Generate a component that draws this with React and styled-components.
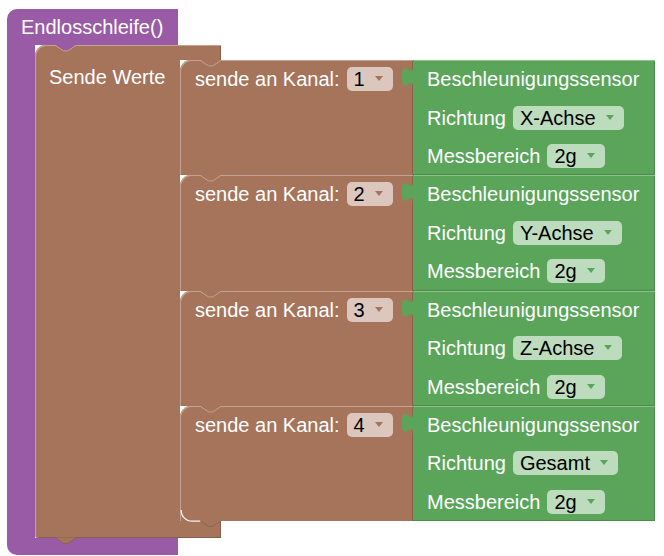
import React from 'react';
import styled, { createGlobalStyle } from 'styled-components';

const C = {
  purple: '#995ba5',
  brown: '#a5745b',
  brownLight: '#c3a291',
  brownDark: '#8a5f4a',
  brownField: '#dbc7bd',
  green: '#5ba55b',
  greenLight: '#8dc28d',
  greenDark: '#4b8c4b',
  greenField: '#bddcbd',
};

const Global = createGlobalStyle`
  html, body { margin: 0; padding: 0; background: #ffffff; }
  body { font-family: "Liberation Sans", Arial, sans-serif; }
`;

const Canvas = styled.div`
  width: 664px;
  height: 556px;
  overflow: hidden;
  box-sizing: border-box;
  padding: 9px 0 0 7px;
  font-family: "Liberation Sans", Arial, sans-serif;
  font-size: 20px;
`;

const Label = styled.span`
  color: #ffffff;
  font-size: 20px;
  line-height: 24px;
  white-space: nowrap;
`;

/* ---------- procedure (purple) ---------- */
const ProcBlock = styled.div`
  display: flex;
  flex-direction: column;
  align-items: flex-start;
`;
const ProcHeader = styled.div`
  width: 171px;
  height: 36px;
  box-sizing: border-box;
  padding-left: 14px;
  display: flex;
  align-items: center;
  background: ${C.purple};
  border-top-left-radius: 10px;
`;
const ProcBody = styled.div`
  display: flex;
`;
const ProcArm = styled.div`
  width: 28px;
  background: ${C.purple};
`;
const ProcFooter = styled.div`
  width: 171px;
  height: 17px;
  background: ${C.purple};
  border-bottom-left-radius: 10px;
`;

/* ---------- statement C block (brown) ---------- */
const CBlock = styled.div`
  display: flex;
  flex-direction: column;
  align-items: flex-start;
`;
const CTop = styled.div`
  position: relative;
  width: 186px;
  height: 15px;
  background: ${C.brown};
  border-top-left-radius: 11px;
  box-shadow: inset 1px 1px 0 ${C.brownLight}, inset -1px 0 0 ${C.brownDark};
`;
const CBody = styled.div`
  display: flex;
`;
const CArm = styled.div`
  width: 145px;
  box-sizing: border-box;
  padding: 5px 0 0 14px;
  background: ${C.brown};
  box-shadow: inset 1px 0 0 ${C.brownLight};
`;
const CStack = styled.div`
  display: flex;
  flex-direction: column;
`;
const CBottom = styled.div`
  position: relative;
  width: 186px;
  height: 17px;
  background: ${C.brown};
  border-bottom-left-radius: 3px;
  box-shadow: inset 1px 0 0 ${C.brownLight}, inset -1px -1px 0 ${C.brownDark};
`;

/* ---------- send rows ---------- */
const SendRow = styled.div`
  display: flex;
  height: 115.25px;
`;
const SendBlock = styled.div`
  position: relative;
  width: 233px;
  box-sizing: border-box;
  padding-left: 15px;
  background: ${C.brown};
  border-top-left-radius: 11px;
  box-shadow: inset 1px 1px 0 ${C.brownLight}, inset -1px 0 0 ${C.brownDark};
`;
const FieldLine = styled.div`
  height: 38.4px;
  display: flex;
  align-items: center;
  gap: 7px;
`;
const SensorBlock = styled.div`
  position: relative;
  width: 242px;
  box-sizing: border-box;
  padding-left: 14px;
  display: flex;
  flex-direction: column;
  background: ${C.green};
  box-shadow: inset 0 1px 0 ${C.greenLight}, inset -1px -1px 0 ${C.greenDark};
`;
const SensorLine = styled(FieldLine)`
  flex: 1;
  height: auto;
`;

/* ---------- dropdown field ---------- */
const Dropdown = styled.span`
  display: inline-flex;
  align-items: center;
  height: 24px;
  box-sizing: border-box;
  padding: 0 10px 0 7px;
  border-radius: 5px;
  background: ${(p) => p.$bg};
  color: #000000;
  font-size: 20px;
  line-height: 24px;
  white-space: nowrap;
`;
const Arrow = styled.span`
  width: 0;
  height: 0;
  margin-left: 10px;
  margin-top: -1px;
  border-left: 4px solid transparent;
  border-right: 4px solid transparent;
  border-top: 5px solid ${(p) => p.$color};
`;

/* ---------- overlays (connectors drawn on top of neighbours) ---------- */
const NotchSvg = styled.svg`
  position: absolute;
  top: 0;
  left: 0;
  z-index: 2;
  overflow: visible;
`;
const TabSvg = styled.svg`
  position: absolute;
  top: 100%;
  left: 0;
  z-index: 3;
  overflow: visible;
`;
const OutputTab = styled.svg`
  position: absolute;
  left: -10.9px;
  top: 0;
  z-index: 2;
`;
const CornerSvg = styled.svg`
  position: absolute;
  left: 0;
  top: calc(100% - 11px);
  z-index: 3;
  overflow: visible;
`;

const Notch = ({ fill, line }) => (
  <NotchSvg width="42" height="7" viewBox="0 0 42 7">
    <polygon points="20.4,0 28.6,5.4 32.7,5.4 40.8,0" fill={fill} />
    <polyline points="20.4,0.5 28.6,5.9 32.7,5.9 40.8,0.5" fill="none" stroke={line} strokeWidth="1" />
  </NotchSvg>
);

const Tab = ({ fill, line }) => (
  <TabSvg width="42" height="7" viewBox="0 0 42 7">
    <polygon points="20.4,-0.5 28.6,5.4 32.7,5.4 40.8,-0.5" fill={fill} />
    <polyline points="20.4,0 28.6,5.4 32.7,5.4 40.8,0" fill="none" stroke={line} strokeWidth="0.8" />
  </TabSvg>
);

const Plug = () => (
  <OutputTab width="12.24" height="30" viewBox="-8 0 9 22">
    <path d="M1,0 H0 V5 C0,15 -8,-3 -8,12.5 S0,10 0,20 V22 H1 Z" fill={C.green} />
  </OutputTab>
);

const InnerCorner = () => (
  <CornerSvg width="22" height="13" viewBox="0 0 22 13">
    <path d="M1.2,0 A10.8,10.8 0 0 0 12,11.2 H20.4" fill="none" stroke="rgba(255,255,255,0.9)" strokeWidth="1.3" />
  </CornerSvg>
);

const Select = ({ value, bg, arrow }) => (
  <Dropdown $bg={bg}>
    {value}
    <Arrow $color={arrow} />
  </Dropdown>
);

const rows = [
  { ch: '1', dir: 'X-Achse' },
  { ch: '2', dir: 'Y-Achse' },
  { ch: '3', dir: 'Z-Achse' },
  { ch: '4', dir: 'Gesamt' },
];

export default function App() {
  return (
    <Canvas>
      <Global />
      <ProcBlock>
        <ProcHeader>
          <Label>Endlosschleife()</Label>
        </ProcHeader>
        <ProcBody>
          <ProcArm />
          <CBlock>
            <CTop>
              <Notch fill={C.purple} line={C.brownLight} />
            </CTop>
            <CBody>
              <CArm>
                <Label>Sende Werte</Label>
              </CArm>
              <CStack>
                {rows.map((r, i) => (
                  <SendRow key={r.ch}>
                    <SendBlock>
                      <Notch fill={C.brown} line={C.brownLight} />
                      <FieldLine>
                        <Label>sende an Kanal:</Label>
                        <Select value={r.ch} bg={C.brownField} arrow={C.brown} />
                      </FieldLine>
                      {i === rows.length - 1 && (
                        <>
                          <InnerCorner />
                          <Tab fill={C.brown} line={C.brownDark} />
                        </>
                      )}
                    </SendBlock>
                    <SensorBlock>
                      <Plug />
                      <SensorLine>
                        <Label>Beschleunigungssensor</Label>
                      </SensorLine>
                      <SensorLine>
                        <Label>Richtung</Label>
                        <Select value={r.dir} bg={C.greenField} arrow={C.green} />
                      </SensorLine>
                      <SensorLine>
                        <Label>Messbereich</Label>
                        <Select value="2g" bg={C.greenField} arrow={C.green} />
                      </SensorLine>
                    </SensorBlock>
                  </SendRow>
                ))}
              </CStack>
            </CBody>
            <CBottom>
              <Tab fill={C.brown} line={C.brownDark} />
            </CBottom>
          </CBlock>
        </ProcBody>
        <ProcFooter />
      </ProcBlock>
    </Canvas>
  );
}
